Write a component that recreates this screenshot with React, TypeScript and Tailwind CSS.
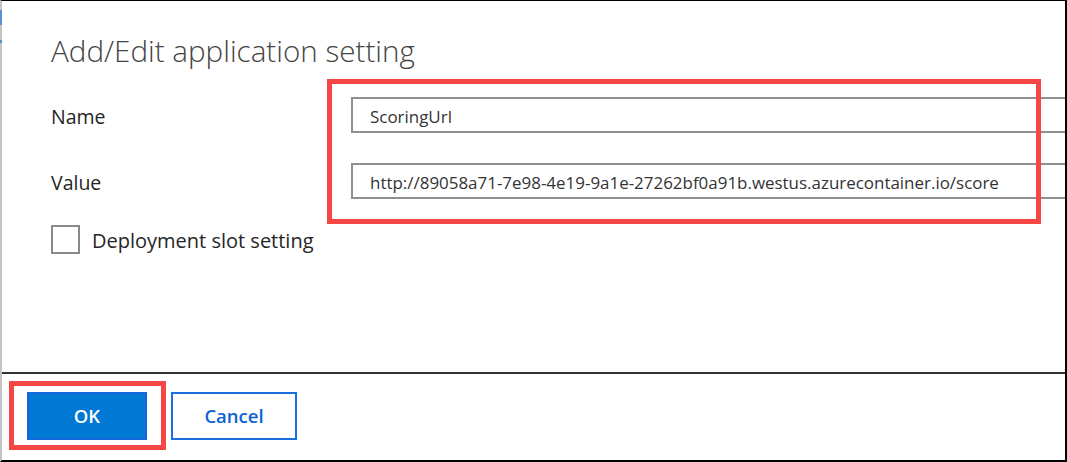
import * as React from "react";

function FieldRow({ label, value, className }: { label: string; value: string; className?: string }) {
  return (
    <div className={`flex h-[36px] items-center ${className ?? ""}`}>
      <div className="w-[300px] shrink-0 pt-[3px] text-[19.5px] text-[#262626]">{label}</div>
      <div className="flex h-[36px] w-[760px] shrink-0 items-center whitespace-nowrap border-2 border-[#8f8f8f] pl-[17px] pt-[3px] text-[16.95px] text-[#333]">
        {value}
      </div>
    </div>
  );
}

export default function App() {
  return (
    <div className="relative h-[462px] w-[1067px] overflow-hidden bg-white font-['Open_Sans','Noto_Sans',sans-serif]">
      <div className="flex h-full w-full flex-col overflow-hidden border-t border-r-2 border-b-2 border-l-2 border-t-black border-r-black border-b-black border-l-[#c4c4c4]">
        {/* dialog body */}
        <div className="h-[371px] shrink-0 pl-[49px] pt-[30px]">
          <h1 className="text-[29.6px] font-light leading-[40px] text-[#444]">
            Add/Edit application setting
          </h1>
          <FieldRow label="Name" value="ScoringUrl" className="mt-[26px]" />
          <FieldRow
            label="Value"
            value="http://89058a71-7e98-4e19-9a1e-27262bf0a91b.westus.azurecontainer.io/score"
            className="mt-[30px]"
          />
          <div className="mt-[26px] flex h-[29px] items-center gap-[12px]">
            <div className="h-[29px] w-[29px] shrink-0 border-2 border-[#8a8a8a] bg-white" />
            <span className="pt-[2px] text-[20px] text-[#262626]">Deployment slot setting</span>
          </div>
        </div>

        {/* footer */}
        <div className="flex-1 border-t-2 border-[#333]">
          <div className="flex gap-[24px] pl-[25px] pt-[18px]">
            <button className="flex h-[48px] w-[120px] items-center justify-center border-2 border-[#1466dc] bg-[#0078d4] text-[18.5px] font-semibold text-white">
              OK
            </button>
            <button className="flex h-[48px] w-[126px] items-center justify-center border-2 border-[#1a6fe0] bg-white text-[18.5px] font-semibold text-[#0a62d6]">
              Cancel
            </button>
          </div>
        </div>
      </div>

      {/* stray bits from the page behind, on the left edge */}
      <span className="absolute left-0 top-[10px] h-[15px] w-[2px] bg-[#5b8fd6]" />
      <span className="absolute left-0 top-[40px] h-[3px] w-[2px] bg-[#5b8fd6]" />

      {/* red annotation boxes */}
      <div className="pointer-events-none absolute left-[327px] top-[79px] h-[145px] w-[714px] border-[5px] border-[#f64545]" />
      <div className="pointer-events-none absolute left-[9px] top-[381px] h-[69px] w-[157px] border-[5px] border-[#f64545]" />
    </div>
  );
}
